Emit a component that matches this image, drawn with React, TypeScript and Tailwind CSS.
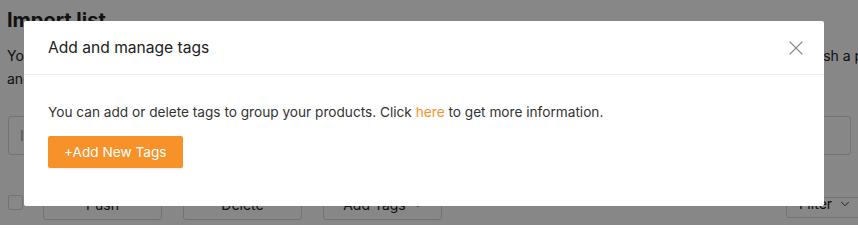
import { X, ChevronDown } from 'lucide-react';

const font = { fontFamily: 'Inter, "Noto Sans", sans-serif' };

function BackgroundPage() {
  return (
    <div className="px-[7px] pt-[6px] text-[#222]">
      <h1 className="text-[20px] font-bold leading-[28px]">Import list</h1>
      <div className="mt-[10px] text-[14px] leading-[23px] whitespace-nowrap">
        <p>You can edit product details, add tags, and organize all of your imported products right here, before you finally decide to push a product</p>
        <p>and sell it in your store.</p>
      </div>
      <div className="mt-[26px] ml-px h-[39px] border border-[#d9d9d9] rounded-[3px] flex items-center px-[11px] text-[14px] text-[#999]">
        Input product name
      </div>
      <div className="mt-[33px] flex items-start">
        <div className="mt-[7px] ml-px w-[15px] h-[15px] border border-[#d9d9d9] rounded-[2px] bg-white" />
        <div className="ml-[20px] flex gap-[21px]">
          {['Push', 'Delete'].map((label) => (
            <div key={label} className="w-[119px] h-[32px] border border-[#d9d9d9] rounded-[3px] flex items-center justify-center text-[14px]">
              {label}
            </div>
          ))}
          <div className="w-[119px] h-[32px] border border-[#d9d9d9] rounded-[3px] flex items-center justify-center gap-2 text-[14px]">
            Add Tags
            <span className="text-[8px]">▼</span>
          </div>
        </div>
        <div className="ml-auto mt-[9px] mr-[-20px] w-[85px] h-[21px] border border-[#d9d9d9] rounded-[3px] flex items-start pl-[12px] gap-[6px] text-[14px] leading-[12px]">
          Filter
          <ChevronDown className="w-[14px] h-[14px] -mt-px" strokeWidth={1.5} />
        </div>
      </div>
    </div>
  );
}

export default function App() {
  return (
    <div className="relative w-[858px] h-[225px] overflow-hidden bg-white" style={font}>
      <BackgroundPage />

      {/* Overlay */}
      <div className="absolute inset-0 bg-black/[0.47]" />

      {/* Modal */}
      <div className="absolute left-[24px] top-[21px] w-[800px] bg-white rounded-[2px]">
        <div className="h-[54px] border-b border-[#ebebeb] flex items-center justify-between pl-[24px] pr-[16px]">
          <h2 className="text-[15.6px] text-[#222] leading-[22px]">Add and manage tags</h2>
          <X className="w-[24px] h-[24px] text-[#8c8c8c]" strokeWidth={1.1} />
        </div>
        <div className="px-[24px] pt-[27px] pb-[38px]">
          <p className="text-[13.65px] leading-[20px] text-[#333]">
            You can add or delete tags to group your products. Click{' '}
            <a className="text-[#f7922a] cursor-pointer">here</a> to get more information.
          </p>
          <button className="mt-[14px] h-[32px] px-[16px] bg-[#f7922a] text-white text-[13.65px] rounded-[2px] shadow-[0_2px_0_rgba(0,0,0,0.04)]">
            +Add New Tags
          </button>
        </div>
      </div>
    </div>
  );
}
